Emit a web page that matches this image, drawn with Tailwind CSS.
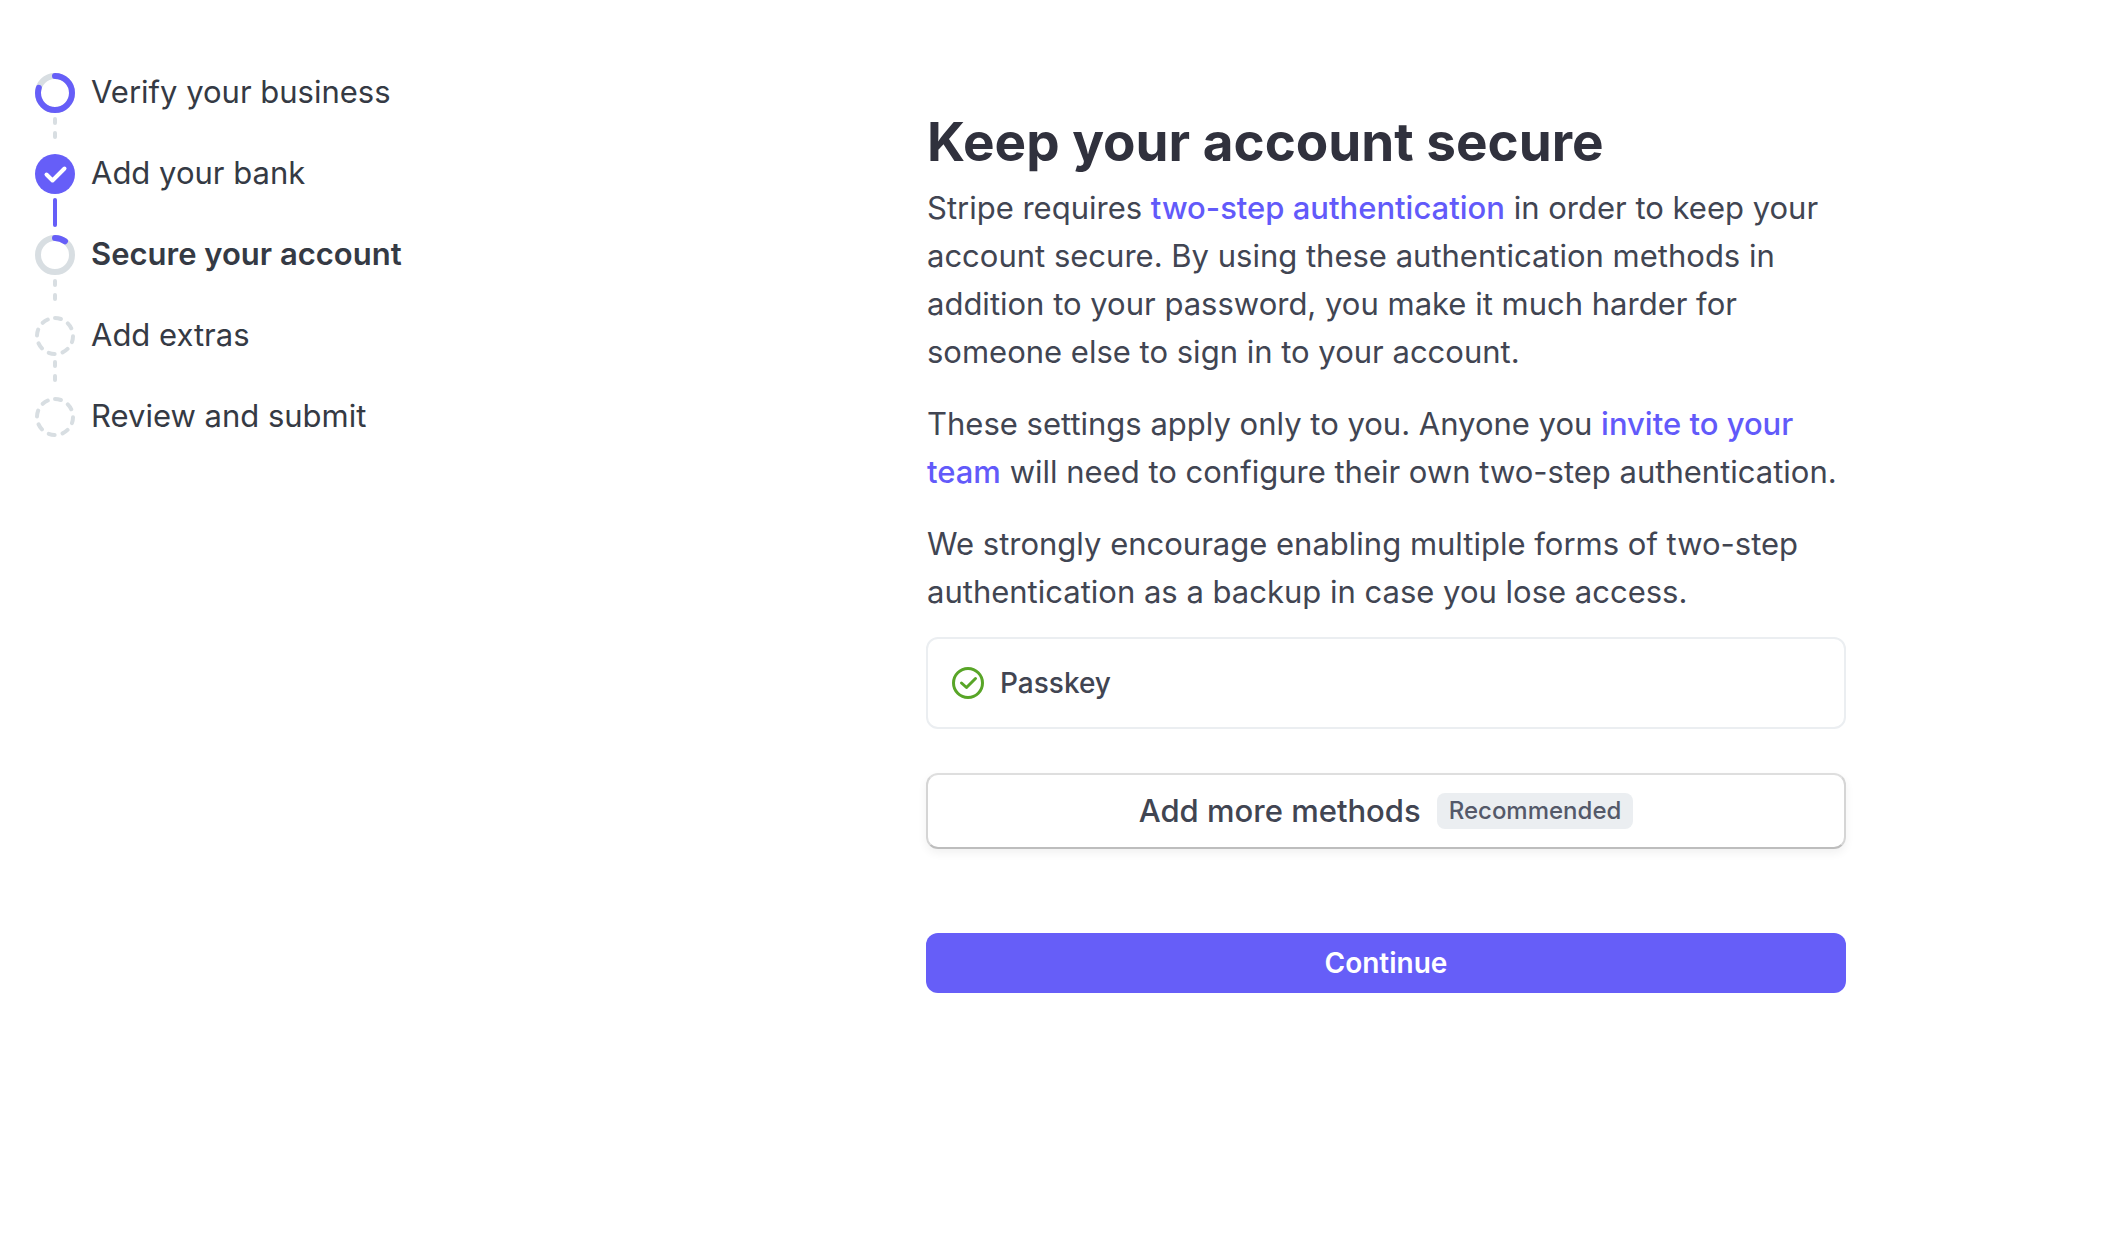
<!DOCTYPE html>
<html lang="en">
<head>
  <meta charset="UTF-8">
  <meta name="viewport" content="width=device-width, initial-scale=1.0">
  <title>Keep your account secure</title>
  <script src="https://cdn.jsdelivr.net/npm/@tailwindcss/browser@4"></script>
</head>
<body class="bg-white min-h-screen font-['Inter','Liberation_Sans',sans-serif] text-[#414552]">

  <div class="flex flex-col lg:flex-row">

    <!-- Onboarding steps -->
    <nav class="lg:w-[652px] shrink-0 px-[35px] pt-[73px]" aria-label="Setup steps">
      <ol class="text-[31px] leading-[38px] text-[#353a44]">
        <li class="flex gap-4">
          <svg class="w-10 h-[81px] shrink-0" viewBox="0 0 40 81" fill="none" stroke-linecap="round">
            <circle cx="20" cy="20" r="17" stroke="#d8dee2" stroke-width="6" />
            <circle cx="20" cy="20" r="17" stroke="#665ef8" stroke-width="6" pathLength="100" stroke-dasharray="80 100" transform="rotate(-90 20 20)" />
            <path d="M20 46v4M20 60v4" stroke="#d8dee2" stroke-width="4" />
          </svg>
          <span>Verify your business</span>
        </li>
        <li class="flex gap-4">
          <svg class="w-10 h-[81px] shrink-0" viewBox="0 0 40 81" fill="none" stroke-linecap="round" stroke-linejoin="round">
            <circle cx="20" cy="20" r="20" fill="#665ef8" />
            <path d="M11.500 20.500L17.500 26.500L29.500 14.500" stroke="#fff" stroke-width="4" />
            <path d="M20 46v25" stroke="#665ef8" stroke-width="4" />
          </svg>
          <span>Add your bank</span>
        </li>
        <li class="flex gap-4">
          <svg class="w-10 h-[81px] shrink-0" viewBox="0 0 40 81" fill="none" stroke-linecap="round">
            <circle cx="20" cy="20" r="17" stroke="#d8dee2" stroke-width="6" />
            <circle cx="20" cy="20" r="17" stroke="#665ef8" stroke-width="6" pathLength="100" stroke-dasharray="10 100" transform="rotate(-90 20 20)" />
            <path d="M20 46v4M20 60v4" stroke="#d8dee2" stroke-width="4" />
          </svg>
          <span class="font-semibold" aria-current="step">Secure your account</span>
        </li>
        <li class="flex gap-4">
          <svg class="w-10 h-[81px] shrink-0" viewBox="0 0 40 81" fill="none" stroke="#d8dee2" stroke-width="4" stroke-linecap="round">
            <circle cx="20" cy="20" r="18" stroke-dasharray="6 8.137" transform="rotate(-90 20 20)" />
            <path d="M20 46v4M20 60v4" />
          </svg>
          <span>Add extras</span>
        </li>
        <li class="flex gap-4">
          <svg class="size-10 shrink-0" viewBox="0 0 40 40" fill="none" stroke="#d8dee2" stroke-width="4" stroke-linecap="round">
            <circle cx="20" cy="20" r="18" stroke-dasharray="6 8.137" transform="rotate(-90 20 20)" />
          </svg>
          <span>Review and submit</span>
        </li>
      </ol>
    </nav>

    <!-- Two-step authentication -->
    <main class="flex-1 px-8 lg:px-0 pt-[108px] pb-16">
      <div class="max-w-[920px] mx-auto">
        <h1 class="pl-px text-[53px] leading-[68px] font-bold text-[#30313d]">Keep your account secure</h1>
        <div class="mt-2 pl-px space-y-6 text-[31px] leading-[48px]">
          <p>Stripe requires <a href="#" class="font-medium text-[#625afa]">two-step authentication</a> in order to keep your account secure. By using these authentication methods in addition to your password, you make it much harder for someone else to sign in to your account.</p>
          <p>These settings apply only to you. Anyone you <a href="#" class="font-medium text-[#625afa]">invite to your team</a> will need to configure their own two-step authentication.</p>
          <p>We strongly encourage enabling multiple forms of two-step authentication as a backup in case you lose access.</p>
        </div>

        <div class="mt-[21px] h-[92px] px-6 flex items-center gap-4 rounded-xl border-2 border-[#ebeef1]">
          <svg class="size-8" viewBox="0 0 32 32" fill="none" stroke="#58a527" stroke-width="3" stroke-linecap="round" stroke-linejoin="round">
            <circle cx="16" cy="16" r="14.500" />
            <path d="M9.500 16L14.500 20.500L23.500 11.500" />
          </svg>
          <span class="text-[28px] leading-10 font-medium">Passkey</span>
        </div>

        <button type="button" class="mt-11 w-full h-[76px] flex items-center justify-center gap-4 rounded-xl border-2 border-[#d5d5d5] border-t-[#dedede] border-b-[#bdbdbd] shadow-[0_4px_10px_rgba(0,0,0,0.06)] text-[31px] font-medium">
          Add more methods
          <span class="h-9 px-3 rounded-lg bg-[#ebeef1] text-[24px] leading-9 text-[#545969]">Recommended</span>
        </button>

        <button type="button" class="mt-[84px] w-full h-[60px] rounded-xl bg-[#665ef8] text-white text-[28px] font-semibold">Continue</button>
      </div>
    </main>

  </div>

</body>
</html>
